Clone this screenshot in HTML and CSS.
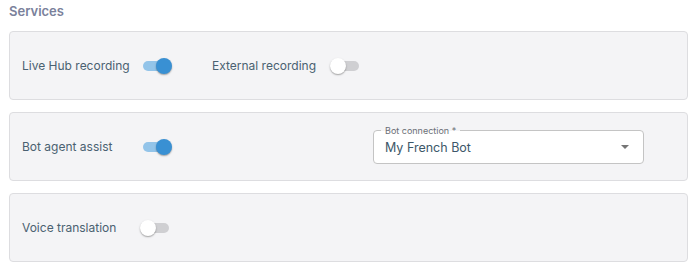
FILE: index.html
```html
<!DOCTYPE html>
<html>
<head>
<meta charset="utf-8">
<link rel="stylesheet" href="styles.css">
</head>
<body>
<div class="page">
  <h2 class="title">Services</h2>
  <section class="card">
    <div class="group">
      <span class="label">Live Hub recording</span>
      <span class="switch on"><span class="track"></span><span class="thumb"></span></span>
    </div>
    <div class="group">
      <span class="label">External recording</span>
      <span class="switch"><span class="track"></span><span class="thumb"></span></span>
    </div>
  </section>
  <section class="card split">
    <div class="group">
      <span class="label">Bot agent assist</span>
      <span class="switch on"><span class="track"></span><span class="thumb"></span></span>
    </div>
    <div class="select">
      <span class="float-label">Bot connection *</span>
      <span class="value">My French Bot</span>
      <svg class="arrow" width="8" height="4" viewBox="0 0 8 4"><path d="M0 0 L8 0 L4 4 Z" fill="#757575"/></svg>
    </div>
  </section>
  <section class="card">
    <div class="group">
      <span class="label">Voice translation</span>
      <span class="switch"><span class="track"></span><span class="thumb"></span></span>
    </div>
  </section>
</div>
</body>
</html>
```

FILE: styles.css
```css
* { box-sizing: border-box; }
html, body { margin: 0; padding: 0; background: #ffffff; }
body { font-family: Inter, "Noto Sans", sans-serif; }
.page { padding: 2px 4px 0 9px; display: flex; flex-direction: column; }
.title {
  margin: 0 0 11px 0;
  font-size: 13px;
  line-height: 18px;
  font-weight: 600;
  color: #7a819b;
}
.card {
  height: 69px;
  background: #f4f4f6;
  border: 1px solid #dddde0;
  border-radius: 4px;
  margin-bottom: 12px;
  padding: 0 12px;
  display: flex;
  align-items: center;
  gap: 36px;
}
.card.split { gap: 0; display: grid; grid-template-columns: 351px 271px; align-items: center; }
.group { display: flex; align-items: center; }
.label {
  min-width: 114px;
  font-size: 12px;
  color: #4a6171;
}
.switch { position: relative; width: 40px; height: 24px; display: inline-block; }
.track {
  position: absolute; left: 7px; top: 7px; width: 26px; height: 10px;
  border-radius: 5px; background: #cfcfd2;
}
.thumb {
  position: absolute; left: 4px; top: 4px; width: 16px; height: 16px; border-radius: 50%;
  background: #ffffff;
  box-shadow: 0 1px 2px rgba(0,0,0,0.25), 0 1px 1px rgba(0,0,0,0.12);
}
.switch.on .track { background: #93c4e9; }
.switch.on .thumb { left: 20px; background: #3990d3; }
.select {
  position: relative;
  height: 34px;
  border: 1px solid #c4c4c4;
  border-radius: 4px;
  background: #ffffff;
  display: flex;
  align-items: center;
  padding: 0 11px;
  margin-top: 1px;
}
.float-label {
  position: absolute; left: 7px; top: -6px;
  padding: 0 4px;
  font-size: 9px; line-height: 11px;
  color: #6b6f76;
  background: linear-gradient(to bottom, #f4f4f6 50%, #ffffff 50%);
}
.value { font-size: 12.5px; color: #3d5869; flex: 1; }
.arrow { margin-right: 3px; }
```
